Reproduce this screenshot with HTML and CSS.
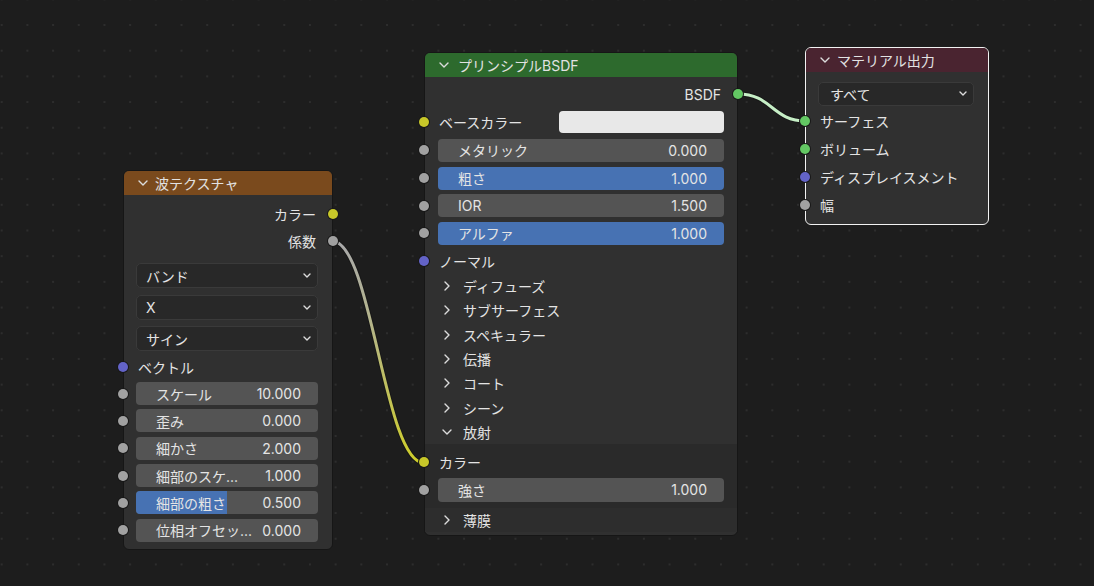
FILE: index.html
```html
<!DOCTYPE html>
<html lang="ja">
<head>
<meta charset="UTF-8" />
<meta name="viewport" content="width=device-width, initial-scale=1" />
<title>シェーダーエディター</title>
<link rel="stylesheet" href="styles.css">
</head>
<body>
<div class="canvas">

  <!-- リンク (ノードの下に描く) -->
  <svg class="links" width="1094" height="586" viewBox="0 0 1094 586">
    <defs>
      <linearGradient id="wire-fac" gradientUnits="userSpaceOnUse" x1="0" y1="245" x2="0" y2="460">
        <stop offset="0" stop-color="#a9a9a9" />
        <stop offset="0.35" stop-color="#b4b48c" />
        <stop offset="1" stop-color="#cdcd2c" />
      </linearGradient>
    </defs>
    <path class="wire-edge" d="M 738 94 C 772 94, 772 121, 806 121" />
    <path class="wire wire-shader" d="M 738 94 C 772 94, 772 121, 806 121" />
    <path class="wire-edge" d="M 332 241 C 372 241, 384 463, 424 463" />
    <path class="wire" stroke="url(#wire-fac)" d="M 332 241 C 372 241, 384 463, 424 463" />
  </svg>

  <!-- 波テクスチャ -->
  <div class="node node-wave">
    <div class="node-head head-texture">
      <svg class="chev" viewBox="0 0 10 10"><polyline points="1,3 5,7 9,3" /></svg>
      <span>波テクスチャ</span>
    </div>
    <div class="node-body wave-body">
      <div class="row out"><span>カラー</span><i class="sock s-color"></i></div>
      <div class="row out"><span>係数</span><i class="sock s-float"></i></div>

      <div class="menus">
        <div class="menu"><span>バンド</span><svg class="menu-chev" viewBox="0 0 8 5"><polyline points="1,1 4,4 7,1" /></svg></div>
        <div class="menu"><span>X</span><svg class="menu-chev" viewBox="0 0 8 5"><polyline points="1,1 4,4 7,1" /></svg></div>
        <div class="menu"><span>サイン</span><svg class="menu-chev" viewBox="0 0 8 5"><polyline points="1,1 4,4 7,1" /></svg></div>
      </div>

      <div class="row vec-row"><i class="sock s-vector"></i><span>ベクトル</span></div>

      <div class="row frow"><i class="sock s-float"></i><div class="field"><span>スケール</span><span>10.000</span></div></div>
      <div class="row frow"><i class="sock s-float"></i><div class="field"><span>歪み</span><span>0.000</span></div></div>
      <div class="row frow"><i class="sock s-float"></i><div class="field"><span>細かさ</span><span>2.000</span></div></div>
      <div class="row frow"><i class="sock s-float"></i><div class="field"><span>細部のスケ...</span><span>1.000</span></div></div>
      <div class="row frow"><i class="sock s-float"></i><div class="field"><b class="fill" style="width:50%"></b><span>細部の粗さ</span><span>0.500</span></div></div>
      <div class="row frow"><i class="sock s-float"></i><div class="field"><span>位相オフセッ...</span><span>0.000</span></div></div>
    </div>
  </div>

  <!-- プリンシプルBSDF -->
  <div class="node node-bsdf">
    <div class="node-head head-shader">
      <svg class="chev" viewBox="0 0 10 10"><polyline points="1,3 5,7 9,3" /></svg>
      <span>プリンシプルBSDF</span>
    </div>
    <div class="node-body bsdf-body">
      <div class="row out bsdf-out"><span>BSDF</span><i class="sock s-shader"></i></div>
      <div class="row swatch-row"><i class="sock s-color"></i><span>ベースカラー</span><div class="swatch"></div></div>

      <div class="row brow"><i class="sock s-float"></i><div class="field"><span>メタリック</span><span>0.000</span></div></div>
      <div class="row brow"><i class="sock s-float"></i><div class="field full"><span>粗さ</span><span>1.000</span></div></div>
      <div class="row brow"><i class="sock s-float"></i><div class="field"><span>IOR</span><span>1.500</span></div></div>
      <div class="row brow"><i class="sock s-float"></i><div class="field full"><span>アルファ</span><span>1.000</span></div></div>
      <div class="row normal-row"><i class="sock s-vector"></i><span>ノーマル</span></div>

      <div class="panel"><svg class="pchev" viewBox="0 0 10 10"><polyline points="3,1 7,5 3,9" /></svg><span>ディフューズ</span></div>
      <div class="panel"><svg class="pchev" viewBox="0 0 10 10"><polyline points="3,1 7,5 3,9" /></svg><span>サブサーフェス</span></div>
      <div class="panel"><svg class="pchev" viewBox="0 0 10 10"><polyline points="3,1 7,5 3,9" /></svg><span>スペキュラー</span></div>
      <div class="panel"><svg class="pchev" viewBox="0 0 10 10"><polyline points="3,1 7,5 3,9" /></svg><span>伝播</span></div>
      <div class="panel"><svg class="pchev" viewBox="0 0 10 10"><polyline points="3,1 7,5 3,9" /></svg><span>コート</span></div>
      <div class="panel"><svg class="pchev" viewBox="0 0 10 10"><polyline points="3,1 7,5 3,9" /></svg><span>シーン</span></div>
      <div class="panel"><svg class="pchev" viewBox="0 0 10 10"><polyline points="1,3 5,7 9,3" /></svg><span>放射</span></div>

      <div class="panel-body">
        <div class="row"><i class="sock s-color"></i><span>カラー</span></div>
        <div class="row brow strength"><i class="sock s-float"></i><div class="field"><span>強さ</span><span>1.000</span></div></div>
      </div>

      <div class="panel panel-last"><svg class="pchev" viewBox="0 0 10 10"><polyline points="3,1 7,5 3,9" /></svg><span>薄膜</span></div>
    </div>
  </div>

  <!-- マテリアル出力 (選択中) -->
  <div class="node node-out selected">
    <div class="node-head head-output">
      <svg class="chev" viewBox="0 0 10 10"><polyline points="1,3 5,7 9,3" /></svg>
      <span>マテリアル出力</span>
    </div>
    <div class="node-body out-body">
      <div class="menu menu-target"><span>すべて</span><svg class="menu-chev" viewBox="0 0 8 5"><polyline points="1,1 4,4 7,1" /></svg></div>
      <div class="row orow"><i class="sock s-shader"></i><span>サーフェス</span></div>
      <div class="row orow"><i class="sock s-shader"></i><span>ボリューム</span></div>
      <div class="row orow"><i class="sock s-vector"></i><span>ディスプレイスメント</span></div>
      <div class="row orow"><i class="sock s-float"></i><span>幅</span></div>
    </div>
  </div>

</div>
</body>
</html>
```

FILE: styles.css
```css
:root {
  --bg: #1d1d1d;
  --node: #303030;
  --node-edge: #161616;
  --text: #e4e4e4;
  --field: #545454;
  --field-active: #4772b3;
  --menu: #282828;
  --sock-color: #c7c729;
  --sock-float: #a1a1a1;
  --sock-vector: #6363c7;
  --sock-shader: #63c763;
}
body {
  margin: 0;
  background: var(--bg);
  font-family: Inter, "Noto Sans CJK JP", sans-serif;
  font-size: 14px;
  color: var(--text);
}
.canvas {
  position: relative;
  width: 1094px;
  height: 586px;
  overflow: hidden;
  background-color: var(--bg);
  background-image: radial-gradient(circle, #2d2d2d 0.9px, transparent 1.4px);
  background-size: 25.7px 25.7px;
  background-position: -11.15px 12.15px;
}
.links {
  position: absolute;
  left: 0;
  top: 0;
}
.wire-edge {
  fill: none;
  stroke: #151515;
  stroke-width: 5;
  opacity: 0.7;
}
.wire {
  fill: none;
  stroke-width: 3;
}
.wire-shader {
  stroke: #c6eec6;
}

/* nodes */
.node {
  position: absolute;
  box-sizing: border-box;
  background: var(--node);
  border: 1px solid var(--node-edge);
  border-radius: 6px;
}
.node-wave { left: 123px; top: 170px; width: 210px; }
.node-bsdf { left: 424px; top: 52px; width: 314px; }
.node-out { left: 805px; top: 47px; width: 184px; }
.node.selected {
  border-color: #f2f2f2;
}
.node-head {
  height: 24px;
  display: flex;
  align-items: center;
  gap: 7px;
  padding-left: 14px;
  border-radius: 5px 5px 0 0;
  color: #e2e2e2;
}
.head-texture { background: #7a4a1d; }
.head-shader { background: #2d6a2d; }
.head-output { background: #4a2430; }
.head-shader { gap: 9px; }
.chev {
  width: 10px;
  height: 10px;
  flex: none;
}
.chev polyline,
.pchev polyline,
.menu-chev polyline {
  fill: none;
  stroke: #dcdcdc;
  stroke-width: 1.4;
  stroke-linecap: round;
  stroke-linejoin: round;
}

/* rows and sockets */
.row {
  position: relative;
  display: flex;
  align-items: center;
  height: 27px;
  padding: 0 13px 0 14px;
}
.row.out {
  justify-content: flex-end;
  padding-right: 16px;
}
.sock {
  position: absolute;
  left: -6px;
  top: 50%;
  width: 10px;
  height: 10px;
  margin-top: -5px;
  border-radius: 50%;
  box-shadow: 0 0 0 1px #181818;
}
.out .sock {
  left: auto;
  right: -6px;
}
.s-color { background: var(--sock-color); }
.s-float { background: var(--sock-float); }
.s-vector { background: var(--sock-vector); }
.s-shader { background: var(--sock-shader); }

/* number fields */
.field {
  position: relative;
  flex: 1;
  height: 23px;
  box-sizing: border-box;
  display: flex;
  align-items: center;
  justify-content: space-between;
  padding: 0 17px 0 20px;
  background: var(--field);
  border-radius: 4px;
  overflow: hidden;
  white-space: nowrap;
}
.field span {
  position: relative;
}
.field.full {
  background: var(--field-active);
}
.fill {
  position: absolute;
  left: 0;
  top: 0;
  bottom: 0;
  background: var(--field-active);
}

/* dropdown menus */
.menu {
  height: 25px;
  box-sizing: border-box;
  margin: 0 14px 0 12px;
  display: flex;
  align-items: center;
  justify-content: space-between;
  padding: 0 6px 0 9px;
  background: var(--menu);
  border: 1px solid #3a3a3a;
  border-radius: 5px;
}
.menu-chev {
  width: 8px;
  height: 5px;
}

/* 波テクスチャ */
.wave-body {
  padding: 5px 0 5px;
}
.menus {
  display: flex;
  flex-direction: column;
  gap: 6.5px;
  margin-top: 9px;
}
.vec-row {
  margin-top: 2px;
}
.frow {
  height: 27.3px;
  padding: 0 14px 0 12px;
}

/* プリンシプルBSDF */
.bsdf-body {
  padding: 3.5px 0 3px;
}
.bsdf-out {
  padding-right: 13px;
}
.swatch-row {
  height: 29px;
}
.swatch {
  width: 165px;
  height: 22px;
  margin-left: auto;
  background: #e8e8e8;
  border-radius: 4px;
}
.brow {
  height: 27.7px;
  padding: 0 13px;
}
.normal-row {
  height: 26.8px;
}
.panel {
  height: 24.27px;
  display: flex;
  align-items: center;
  gap: 11px;
  padding-left: 17px;
}
.pchev {
  width: 10px;
  height: 10px;
  flex: none;
}
.panel-body {
  background: #2a2a2a;
  padding: 5px 0 4.5px;
}
.panel-last {
  background: #2d2d2d;
}
.panel-body .row {
  height: 27px;
}
.panel-body .strength {
  height: 27.5px;
}
.strength .field {
  height: 24px;
}

/* マテリアル出力 */
.out-body {
  padding: 9.7px 0 5px;
}
.menu-target {
  height: 24.3px;
  margin-bottom: 1px;
  padding-left: 11px;
}
.orow {
  height: 28px;
}
```
